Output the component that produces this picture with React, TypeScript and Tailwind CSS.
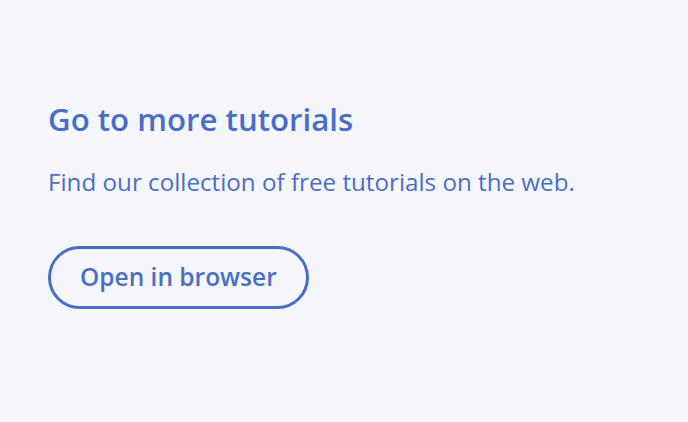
export default function App() {
  return (
    <div className="w-[688px] h-[422px] bg-[#f5f6fb] text-[#4a6ec4] font-['Open_Sans',sans-serif] px-12 pt-[99px]">
      <h1 className="text-[31.2px] leading-[40px] font-semibold">Go to more tutorials</h1>
      <p className="mt-[28px] text-[24.2px] leading-[30px]">Find our collection of free tutorials on the web.</p>
      <button className="mt-[49px] h-[63px] px-[29px] rounded-full border-[3px] border-[#4a6ec4] text-[24.5px] font-semibold">Open in browser</button>
    </div>
  );
}
